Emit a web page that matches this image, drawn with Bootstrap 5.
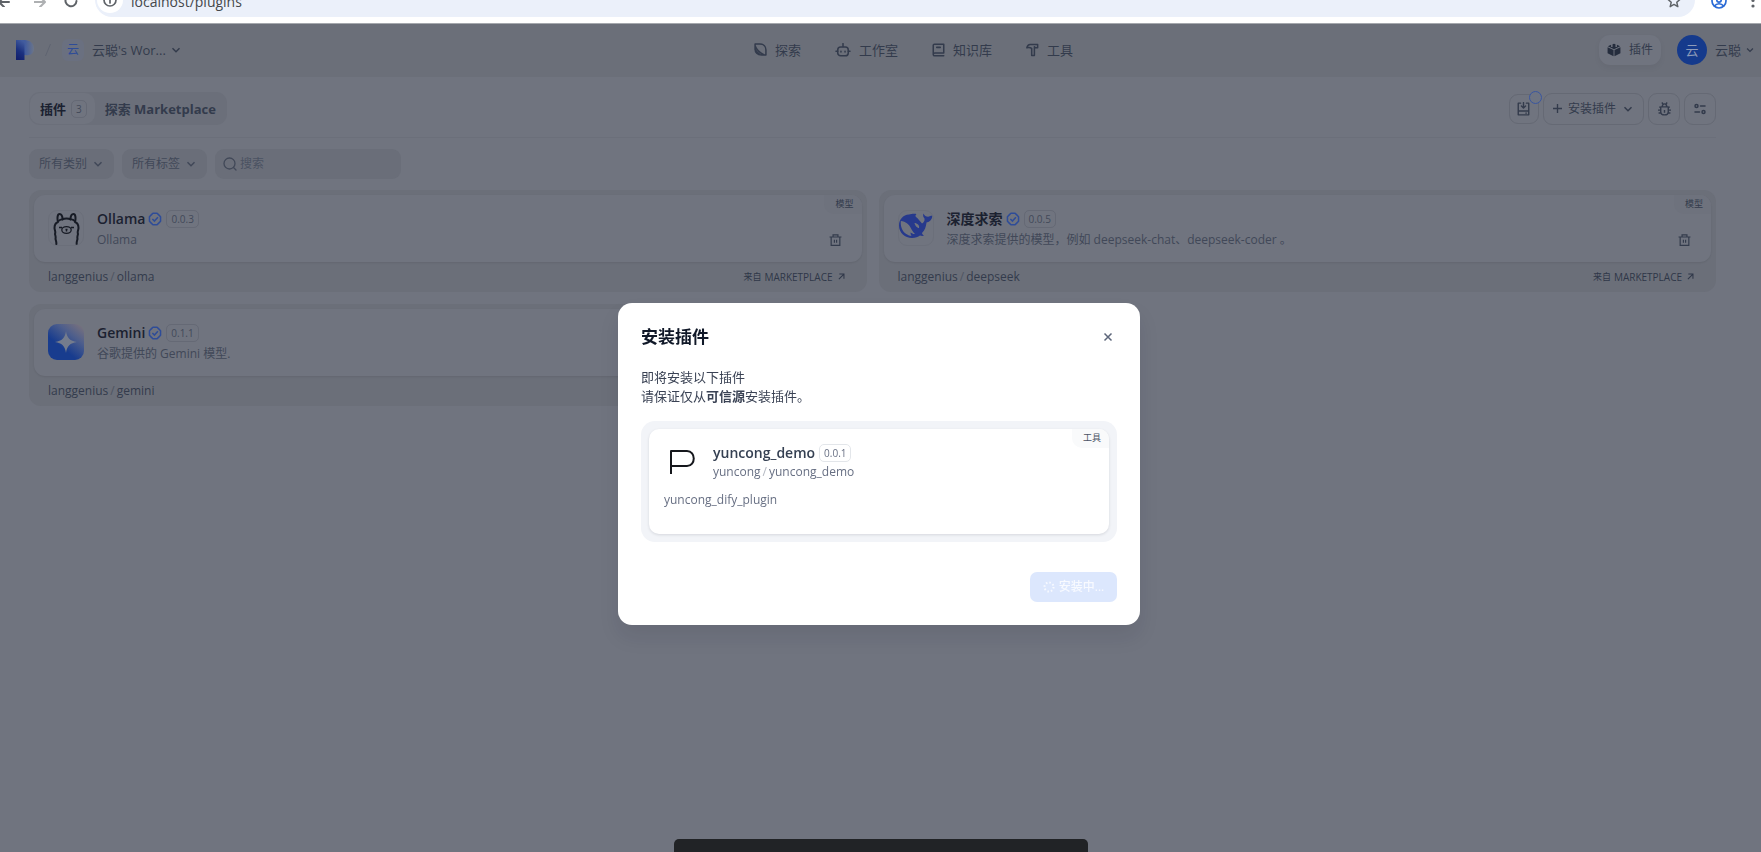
<!DOCTYPE html>
<html lang="zh-CN">
<head>
<meta charset="utf-8">
<meta name="viewport" content="width=device-width, initial-scale=1">
<title>插件</title>
<link href="https://cdn.jsdelivr.net/npm/bootstrap@5.3.0/dist/css/bootstrap.min.css" rel="stylesheet">
<style>
:root{--page:#70747f;--bar:#6b6f79;--ink:#1b2130;--text:#333b4c;--soft:#414858;--blue:#2e4c98}
body{font-family:"Open Sans","Noto Sans CJK SC",sans-serif;font-size:13px;line-height:20px;background:var(--page);color:var(--text);overflow:hidden}
svg{display:block;flex:none}
a{color:inherit;text-decoration:none}
button,input{font:inherit;color:inherit}
.ic{fill:none;stroke:currentColor;stroke-width:2;stroke-linecap:round;stroke-linejoin:round}
.chrome{height:24px;background:#fff;border-bottom:1px solid #a5a8ad;padding:0 6px 6px 0;color:#5f6368;overflow:hidden}
.chrome .plain{border:0;background:none;padding:0;height:34px;display:flex;align-items:center}
.chrome .gap-start{margin-left:18px}
.omnibox{height:34px;border-radius:17px;background:#ebf0fa;padding:0 14px 0 2px;margin:0 16px 0 17px}
.omnibox input{border:0;background:none;outline:0;padding:0;font-size:14px;line-height:22px;color:#44474b;min-width:0;padding-top:3px}
.info-dot{width:26px;height:26px;border-radius:50%;background:#fff}
.topbar{height:53px;background:var(--bar);padding:0 6px 2px 16px}
.side{flex:1 1 0}
.main-nav{gap:34px;padding-left:56px}
.main-nav a{display:flex;align-items:center;gap:8px}
.ws{width:22px;height:22px;border-radius:6px;background:#6a7080;color:var(--blue);font-size:12px}
.flat{border:0;background:none;padding:0;display:flex;align-items:center}
.plug{height:30px;border-radius:11px;background:var(--page);padding:0 8px;gap:8px;font-size:12px;box-shadow:0 3px 6px #0000000c}
.avatar{width:30px;height:30px;border-radius:50%;background:#153a8c;color:#8d9bb9}
.content{padding:15px 45px 0 29px}
.toolbar{padding-bottom:12px;border-bottom:1px solid #6b6f7a}
.tabs{height:33px;border-radius:11px;background:#6b6f7a;padding:1px;font-weight:700}
.tabs a{display:flex;align-items:center;height:31px;padding:0 10px;border-radius:10px}
.tabs a.on{background:var(--page);color:var(--ink);padding-right:8px;gap:5px}
.ver{display:inline-flex;align-items:center;height:18px;padding:0 4px;border:1px solid #656975;border-radius:5px;font-size:10px;line-height:16px;font-weight:400;color:#424959}
.tool{height:32px;min-width:32px;display:flex;align-items:center;justify-content:center;border:1px solid #656974;border-radius:9px;background:var(--page);padding:0;font-size:12px}
.tool.small-one{height:30px;min-width:30px}
.tool.wide{padding:0 9px;gap:6px}
.dot{position:absolute;right:-4px;top:-4px;width:13px;height:13px;border-radius:50%;border:1px solid #3a56a0;background:#6e7482}
.filters{padding:11px 0;gap:8px;font-size:12px}
.pill{height:30px;border:0;border-radius:9px;background:#6a6e79;padding:0 10px;gap:5px;display:flex;align-items:center;color:var(--soft)}
.search{width:186px;gap:3px;padding-left:8px}
.search input{border:0;background:none;outline:0;padding:0;min-width:0}
.search input::placeholder{color:#4b5262;opacity:1}
.plugins{display:grid;grid-template-columns:repeat(2,minmax(0,1fr));gap:12px}
.plugin{background:#6b6f79;border-radius:12px;padding:5px 5px 0;height:102px}
.inner{position:relative;background:var(--page);border-radius:11px;height:67px;padding:14px 14px 0;gap:13px;box-shadow:0 1px 2px #00000014;overflow:hidden}
.logo{width:36px;height:36px;border-radius:9px;border:1px solid #6b6f7a;overflow:hidden;margin-top:1px}
.name{font-size:14px;font-weight:600;color:var(--ink);line-height:20px;gap:3px}
.name .ver{margin-left:1px}
.desc{font-size:12px;line-height:18px;color:var(--soft);margin-top:2px}
.tag{position:absolute;right:0;top:0;height:19px;line-height:18px;padding:0 8px 0 11px;font-size:9px;background:#6e727d;border-bottom-left-radius:10px}
.del{position:absolute;right:20px;bottom:15px}
.foot{height:29px;padding:0 14px;font-size:12px}
.foot .src{font-size:10px;gap:5px;color:#2f3748;padding-right:3px}
.src .zh{font-size:9px;margin-right:-2px}
.sep{margin:0 2px;opacity:.5}
.layer{position:fixed;inset:75px 0 0 0;display:flex;align-items:center;justify-content:center;pointer-events:none}
.dialog{pointer-events:auto;width:522px;max-width:100%;background:#fff;border-radius:14px;padding:23px;color:#3a4254;box-shadow:0 12px 20px #10182818;margin-right:3px}
.dialog h2{font-size:17px;line-height:22px;font-weight:700;color:#101828;margin:0}
.lead-in{font-size:13px;line-height:19px;margin:20px 0 15px}
.well{background:#f2f4f8;border-radius:14px;padding:8px}
.pack{position:relative;background:#fff;border-radius:10px;height:105px;padding:14px 15px;box-shadow:0 1px 3px #10182820;overflow:hidden;color:#676f83}
.pack .words{margin-left:13px}
.pack .name{color:#354052;line-height:20px}
.pack .ver{border-color:#e3e6ea;color:#676f83}
.pack .tag{background:#f9fafb;color:#4a5264}
.pack .sub{font-size:12px;line-height:16px;margin-top:1px}
.pack .about{font-size:12px;line-height:18px;margin:11px 0 0}
.go{width:87px;height:30px;border:0;border-radius:7px;background:#dce7fd;color:#f8faff;font-size:12px;font-weight:500;gap:4px;margin-top:30px}
.dock{position:fixed;bottom:0;left:50%;margin-left:-207px;width:414px;height:13px;border-radius:5px 5px 0 0;background:#212326}
</style>
</head>
<body>
<svg width="0" height="0" class="position-absolute" aria-hidden="true">
  <symbol id="chev" viewBox="0 0 12 12"><path d="M2.500 4.200L6 7.700l3.500-3.500" fill="none" stroke="currentColor" stroke-width="1.500"/></symbol>
  <symbol id="seal" viewBox="0 0 24 24"><path d="M8.500 2h7L18 4.500 21.500 8v8L18 19.500 15.500 22h-7L6 19.500 2.500 16V8L6 4.500z" fill="none" stroke="currentColor" stroke-width="2.600" stroke-linejoin="round"/><path d="M7.500 12l3.500 3.500 6-6.500" fill="none" stroke="currentColor" stroke-width="2.600"/></symbol>
  <symbol id="bin" viewBox="0 0 24 24"><path d="M1 6.500h22M4 6.500V22h16V6.500M7.500 6V2.500h9V6M10 11.500v5.500M14 11.500v5.500" fill="none" stroke="currentColor" stroke-width="2.200"/></symbol>
  <symbol id="out" viewBox="0 0 8 8"><path d="M1 7l5.500-5.500M1.500 1.200h5.300v5.300" fill="none" stroke="currentColor" stroke-width="1.200"/></symbol>
</svg>

<div class="chrome d-flex align-items-end">
  <button class="plain" aria-label="后退"><svg width="10" height="14" viewBox="0 0 10 14" class="ic"><path d="M9 9H0M4 4L-1 9l5 5"/></svg></button>
  <button class="plain ms-4" aria-label="前进"><svg width="12" height="14" viewBox="1 0 12 14" class="ic" opacity=".5"><path d="M1 9h10M7 4l5 5-5 5"/></svg></button>
  <button class="plain gap-start" aria-label="刷新"><svg width="14" height="16" viewBox="0 0 14 16" class="ic"><path d="M12.500 9A5.500 5.500 0 1 1 11 5M12.500 2v4h-4"/></svg></button>
  <div class="omnibox d-flex align-items-center flex-fill">
    <span class="info-dot d-flex align-items-center justify-content-center me-2"><svg width="14" height="14" viewBox="0 0 14 14" class="ic" style="stroke-width:1.700"><circle cx="7" cy="7" r="6"/><path d="M7 6.500V10M7 4v.1"/></svg></span>
    <input class="flex-fill" aria-label="地址" value="localhost/plugins">
    <svg width="14" height="18" viewBox="0 0 14 18" class="ic" style="stroke-width:1.500"><path d="M7 4l1.800 4 4.200.4-3.200 2.900 1 4.300L7 13.400l-3.800 2.200 1-4.300L1 8.400 5.200 8z"/></svg>
  </div>
  <button class="plain me-4" aria-label="账户"><svg width="16" height="18" viewBox="0 0 16 18" class="ic" color="#2b6bd6" style="stroke-width:1.700"><circle cx="8" cy="10" r="7"/><circle cx="8" cy="9" r="2.200"/><path d="M3.500 15c2-3 7-3 9 0"/></svg></button>
  <button class="plain" aria-label="菜单"><svg width="4" height="16" viewBox="0 0 4 16" fill="currentColor"><circle cx="2" cy="3" r="1.600"/><circle cx="2" cy="8.500" r="1.600"/><circle cx="2" cy="14" r="1.600"/></svg></button>
</div>

<header class="topbar d-flex align-items-center">
  <div class="side d-flex align-items-center">
    <svg width="18" height="20" viewBox="0 0 18 20"><defs><linearGradient id="lg" x1=".6" x2=".3" y1="0" y2="1"><stop offset="0" stop-color="#425c9e"/><stop offset=".55" stop-color="#1c3180"/><stop offset="1" stop-color="#121f6c"/></linearGradient><linearGradient id="lh"><stop offset=".2" stop-color="#425c9e"/><stop offset="1" stop-color="#6b7589"/></linearGradient></defs><path d="M7 0h1.500C14 0 18 3.500 18 8.500S14.500 16 9 15H7z" fill="url(#lh)"/><path d="M0 0h8.500v20H0z" fill="url(#lg)"/></svg>
    <svg class="mx-2" width="12" height="16" viewBox="0 0 12 16"><path d="M8.500 2l-5 12" stroke="#5f6471"/></svg>
    <button class="flat"><span class="ws d-flex align-items-center justify-content-center">云</span><span class="ms-2">云聪's Wor...</span><svg class="ms-1" width="12" height="12"><use href="#chev"/></svg></button>
  </div>
  <nav class="main-nav d-flex">
    <a href="#"><svg width="13" height="13" viewBox="0 0 24 24" class="ic" style="stroke-width:2.800"><path d="M2 2h9c7 0 11 5 11 11v9h-8C6 22 2 17 2 11zM2 5c3 8 8 13 17 17M2 12c3 5 5 8 10 10"/></svg>探索</a>
    <a href="#"><svg width="16" height="14" viewBox="0 0 26 24" class="ic" style="stroke-width:2.600"><rect x="4" y="7" width="18" height="15" rx="5"/><path d="M13 6V1M4 14H1M22 14h3M9.500 14v1.500M16.500 14v1.500"/></svg>工作室</a>
    <a href="#"><svg width="13" height="14" viewBox="0 0 22 24" class="ic" style="stroke-width:2.600"><path d="M20 17V2H4a2 2 0 0 0-2 2v15.500A2.500 2.500 0 0 0 4.500 22H20M20 17H4.500A2.500 2.500 0 0 0 2 19.500M8 7.500h6"/></svg>知识库</a>
    <a href="#"><svg width="13" height="14" viewBox="0 0 24 24" class="ic" style="stroke-width:2.800"><path d="M1.500 8c1-4 3-6 6-6h14v6h-4l-2-2v16h-5V9c-3-2-6-2-9-1z"/></svg>工具</a>
  </nav>
  <div class="side d-flex align-items-center justify-content-end">
    <button class="flat plug me-3"><svg width="14" height="15" viewBox="0 0 24 24" fill="#252d3d"><path d="M12 11.500L1.500 6.500 7 4v3.500h2.500V3L12 2l2.500 1v4.500H17V4l5.500 2.500zM1 8l10.200 4.800V23.500L1 18.500zM23 8l-10.200 4.800v10.700l10.200-5z"/></svg>插件</button>
    <button class="flat"><span class="avatar d-flex align-items-center justify-content-center me-2">云</span>云聪<svg class="ms-1" width="10" height="10"><use href="#chev"/></svg></button>
  </div>
</header>

<main class="content">
  <div class="toolbar d-flex align-items-center justify-content-between">
    <div class="tabs d-flex"><a class="on" href="#">插件<span class="ver">3</span></a><a href="#">探索 Marketplace</a></div>
    <div class="d-flex align-items-center gap-1">
      <button class="tool small-one position-relative" aria-label="安装任务"><svg width="13" height="14" viewBox="0 0 22 24" class="ic" style="stroke-width:2.400"><path d="M6 2H2v20h18V2h-4M2 15.500h18M11 1v9M7.500 7l3.500 3.500L14.500 7M15 19h1"/></svg><span class="dot"></span></button>
      <button class="tool wide"><svg width="9" height="9" viewBox="0 0 10 10"><path d="M5 0v10M0 5h10" stroke="currentColor" stroke-width="1.500"/></svg><span>安装插件</span><svg width="12" height="12"><use href="#chev"/></svg></button>
      <button class="tool" aria-label="调试"><svg width="13" height="14" viewBox="0 0 24 26" class="ic" style="stroke-width:2.600;stroke-linecap:butt"><path d="M5 9h14v9q0 6-7 6t-7-6zM8 8c0-6 8-6 8 0M5 9.500H2M19 9.500h3M5 15H0M19 15h5M5 20.500H1M19 20.500h4M12 15v5M7 1l2.500 3M17 1l-2.500 3"/></svg></button>
      <button class="tool" aria-label="设置"><svg width="12" height="12" viewBox="0 0 24 24" class="ic" style="stroke-width:3"><circle cx="5" cy="6" r="3"/><path d="M13 6h9M2 18h9"/><circle cx="19" cy="18" r="3"/></svg></button>
    </div>
  </div>

  <div class="filters d-flex">
    <button class="pill">所有类别<svg width="12" height="12"><use href="#chev"/></svg></button>
    <button class="pill">所有标签<svg width="12" height="12"><use href="#chev"/></svg></button>
    <label class="pill search"><svg width="14" height="14" viewBox="0 0 14 14" class="ic" style="stroke-width:1.300"><circle cx="6.500" cy="6.500" r="5.500"/><path d="M10.500 10.500L13 13"/></svg><input class="flex-fill" type="text" placeholder="搜索" aria-label="搜索"></label>
  </div>

  <section class="plugins">
    <article class="plugin">
      <div class="inner d-flex">
        <div class="logo"><svg width="34" height="34" viewBox="0 0 34 34" fill="none" stroke="#171b25" stroke-width="2" stroke-linejoin="round"><path d="M7 34c1-2 0-4-.5-6 .5-2 0-3-.5-5 1-2-.500-4-.500-6 0-3 1-5 3.500-6C8 7 8.500 3 10.500 3s3 2.500 3 5.500c2-1.500 6-1.500 8 0 0-3 1-5.500 3-5.500s2.500 4 1.500 8c2.500 1 3.500 3 3.500 6 0 2-1.500 4-.500 6-.5 2-1 3-.5 5-.5 2-1.500 4-.5 6"/><ellipse cx="17.500" cy="19" rx="4.700" ry="3.400" stroke-width="1.300"/><path d="M10 16.500h3M22 16.500h3M16.500 18.500h2M17.500 18.500v2" stroke-width="1.400"/><path d="M9 10.500c2-2 3-2.500 5-2M21 8.500c2-.5 3.500 0 5 2" stroke-width="1.600"/></svg></div>
        <div><div class="name d-flex align-items-center">Ollama<svg width="14" height="14" color="#2e4c98"><use href="#seal"/></svg><span class="ver">0.0.3</span></div><div class="desc">Ollama</div></div>
        <span class="tag">模型</span><button class="flat del" aria-label="删除"><svg width="13" height="14"><use href="#bin"/></svg></button>
      </div>
      <div class="foot d-flex align-items-center justify-content-between"><span>langgenius<span class="sep">/</span>ollama</span><a class="src d-flex align-items-center" href="#"><span class="zh">来自</span>MARKETPLACE<svg width="7" height="7"><use href="#out"/></svg></a></div>
    </article>
    <article class="plugin">
      <div class="inner d-flex">
        <div class="logo"><svg width="34" height="34" viewBox="0 0 34 34"><path fill="#26398c" d="M33.500 4.500c-2 0-3 1-4.500 1.200C27 5.500 25.500 5 24.500 2.500c-1 2 0 4 1 5 .5 2.500-1 4-2.500 5-2-2-4-5-6-6.500-1-1-.5-2 .5-3C15 2.500 12 3 10 3.500 4 4 0 8.500 0 14.500 0 22 6 27 13 27c3.500 0 6-1 8-2.500 1.500.5 3 .5 4 0-1-.5-2-1.500-2-2.500 3-3 4-6.500 4.500-10.500 3.500-.5 5.500-3 6-7z"/><path fill="#70747f" d="M1.800 10c5 .5 8 3 10 7 1.200 2.400 2.500 4.500 4.200 6-1.500.3-3-.5-4.500-1.500 0 1.500.5 2.500 1 3.500C5.500 24 1 18 1.800 10zM15.500 12c2.500 0 5.500 2.500 4.500 5-2 0-4-2.500-4.500-5z"/></svg></div>
        <div><div class="name d-flex align-items-center">深度求索<svg width="14" height="14" color="#2e4c98"><use href="#seal"/></svg><span class="ver">0.0.5</span></div><div class="desc">深度求索提供的模型，例如 deepseek-chat、deepseek-coder 。</div></div>
        <span class="tag">模型</span><button class="flat del" aria-label="删除"><svg width="13" height="14"><use href="#bin"/></svg></button>
      </div>
      <div class="foot d-flex align-items-center justify-content-between"><span>langgenius<span class="sep">/</span>deepseek</span><a class="src d-flex align-items-center" href="#"><span class="zh">来自</span>MARKETPLACE<svg width="7" height="7"><use href="#out"/></svg></a></div>
    </article>
    <article class="plugin">
      <div class="inner d-flex">
        <div class="logo border-0"><svg width="36" height="36" viewBox="0 0 36 36"><defs><linearGradient id="gm" x1=".2" y1="1" x2="1" y2="0"><stop offset=".3" stop-color="#183c8e"/><stop offset=".65" stop-color="#4d5e8c"/><stop offset="1" stop-color="#80757a"/></linearGradient></defs><path fill="url(#gm)" d="M0 0h36v36H0z"/><path fill="#747c8d" d="M18 7c1 7 4 10 11 11-7 1-10 4-11 11-1-7-4-10-11-11 7-1 10-4 11-11z"/></svg></div>
        <div><div class="name d-flex align-items-center">Gemini<svg width="14" height="14" color="#2e4c98"><use href="#seal"/></svg><span class="ver">0.1.1</span></div><div class="desc">谷歌提供的 Gemini 模型.</div></div>
        <span class="tag">模型</span>
      </div>
      <div class="foot d-flex align-items-center"><span>langgenius<span class="sep">/</span>gemini</span></div>
    </article>
  </section>
</main>

<div class="layer">
  <section class="dialog" role="dialog" aria-modal="true" aria-labelledby="dlg">
    <div class="d-flex align-items-center justify-content-between"><h2 id="dlg">安装插件</h2><button class="flat me-1" aria-label="关闭"><svg width="10" height="10" viewBox="0 0 10 10"><path d="M1.500 1.500l7 7M8.500 1.500l-7 7" stroke="#5d667a" stroke-width="1.500"/></svg></button></div>
    <p class="lead-in">即将安装以下插件<br>请保证仅从<b>可信源</b>安装插件。</p>
    <div class="well"><div class="pack">
      <span class="tag">工具</span>
      <div class="d-flex"><svg width="36" height="36" viewBox="0 0 36 36" fill="none" stroke="#15171c" stroke-width="2"><path d="M7 31V8h16c9 0 9 15 0 15H7" stroke-linejoin="round"/></svg>
        <div class="words"><div class="name d-flex align-items-center">yuncong_demo<span class="ver">0.0.1</span></div><div class="sub">yuncong<span class="sep">/</span>yuncong_demo</div></div></div>
      <p class="about">yuncong_dify_plugin</p>
    </div></div>
    <button class="go d-flex align-items-center justify-content-center ms-auto" disabled><svg width="12" height="12" viewBox="0 0 12 12"><circle cx="6" cy="6" r="4.500" fill="none" stroke="currentColor" stroke-width="2" stroke-dasharray="1.500 2"/></svg>安装中...</button>
  </section>
</div>
<div class="dock"></div>
<script src="https://cdn.jsdelivr.net/npm/bootstrap@5.3.0/dist/js/bootstrap.bundle.min.js"></script>
</body>
</html>
